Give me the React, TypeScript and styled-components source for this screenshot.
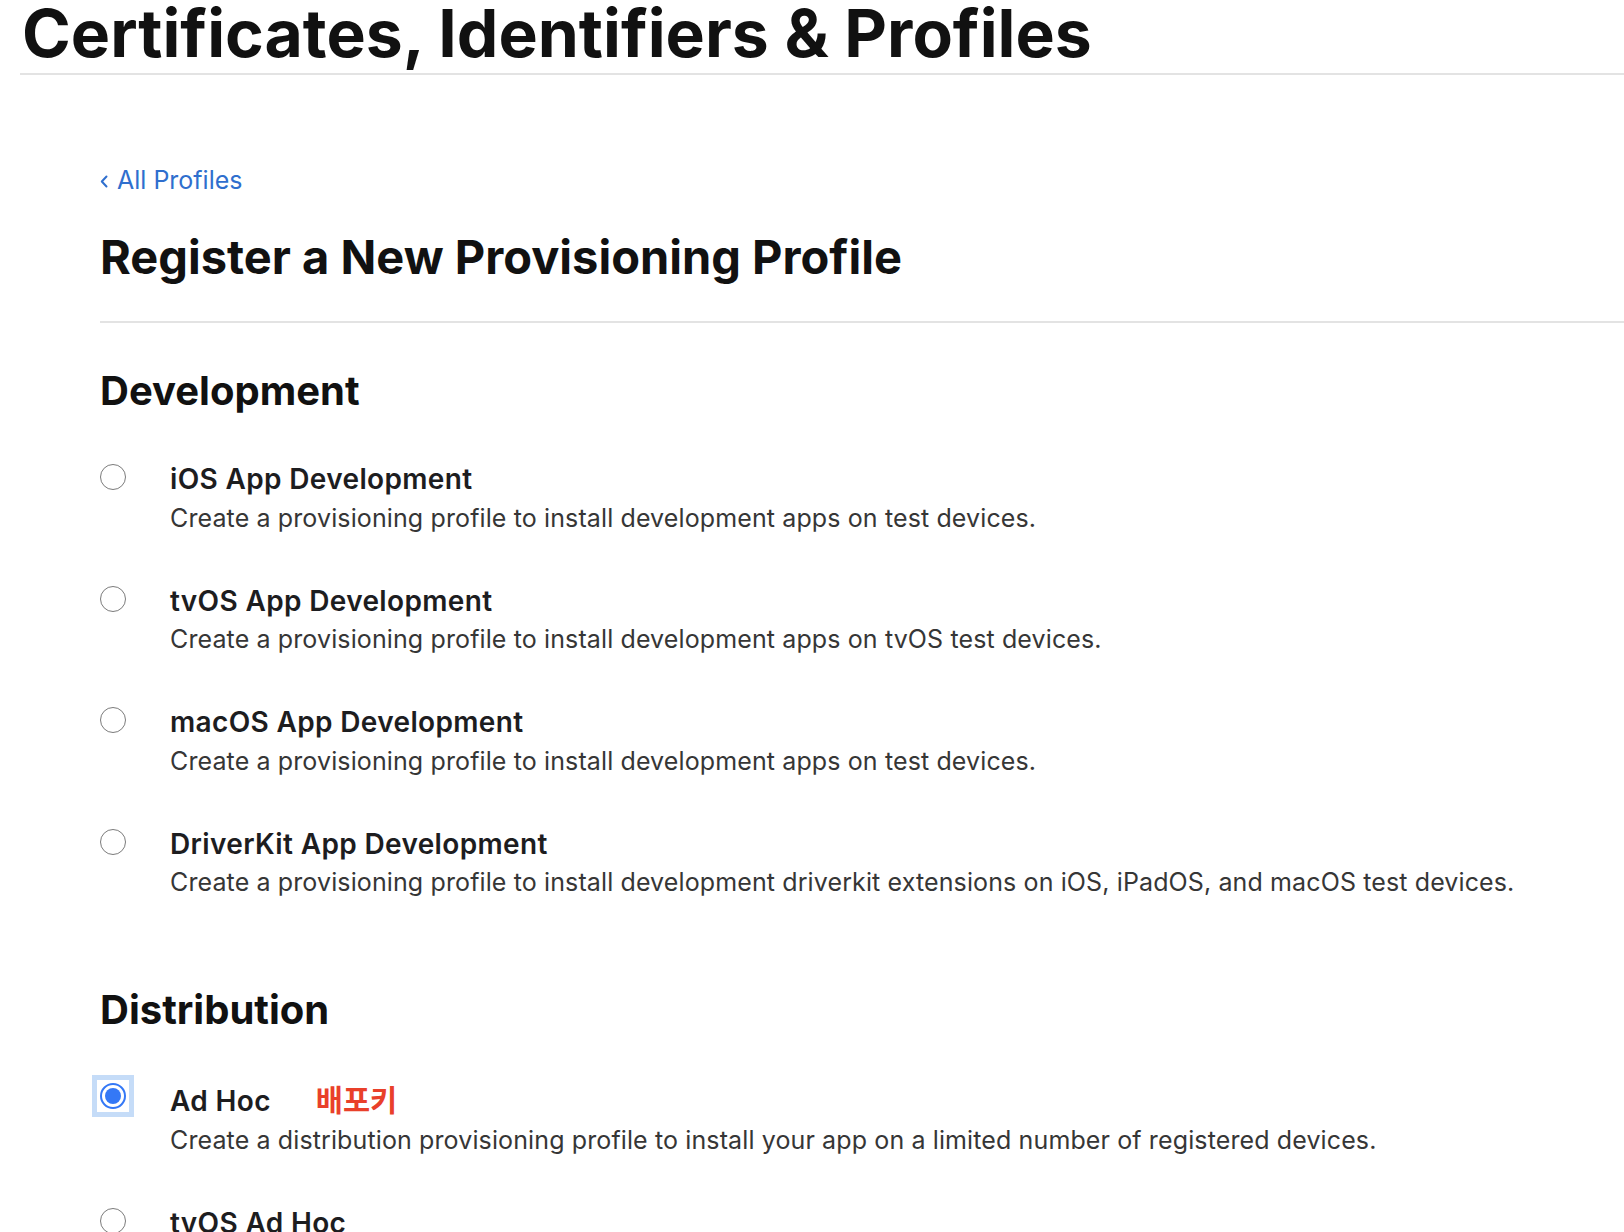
import React from "react";
import styled, { createGlobalStyle, css } from "styled-components";

const GlobalStyle = createGlobalStyle`
  html, body {
    margin: 0;
    padding: 0;
    background: #ffffff;
  }
  body {
    font-family: Inter, "Noto Sans", "Noto Sans CJK KR", sans-serif;
    color: #1d1d1f;
    -webkit-font-smoothing: antialiased;
  }
`;

// ---------- header ----------
const Header = styled.header`
  margin-left: 20px;
  padding-bottom: 7px;
  border-bottom: 2px solid #e3e3e3;
`;

const PageTitle = styled.h1`
  margin: 0;
  padding-left: 2px;
  font-size: 66px;
  line-height: 66px;
  font-weight: 700;
  color: #111111;
`;

// ---------- content ----------
const Main = styled.main`
  padding-left: 100px;
`;

const BackLink = styled.a`
  display: inline-flex;
  align-items: center;
  gap: 9px;
  margin-top: 91px;
  font-size: 25px;
  line-height: 28.8px;
  color: #2f6fce;
  text-decoration: none;
  cursor: pointer;

  svg {
    margin-top: 2px;
  }
`;

const FormTitle = styled.h2`
  margin: 35px 0 0;
  font-size: 47px;
  line-height: 54px;
  font-weight: 700;
  color: #111111;
`;

const Divider = styled.div`
  height: 2px;
  margin-top: 37px;
  background: #e3e3e3;
`;

const Section = styled.section<{ $gap: number }>`
  margin-top: ${(p) => p.$gap}px;
`;

const SectionTitle = styled.h3`
  margin: 0;
  font-size: 40px;
  line-height: 48px;
  font-weight: 700;
  color: #111111;
`;

const OptionList = styled.div`
  display: flex;
  flex-direction: column;
  gap: 51px;
  margin-top: 47.5px;
`;

const Option = styled.label`
  display: flex;
  align-items: flex-start;
  cursor: pointer;
`;

const RadioCell = styled.div`
  width: 70px;
  flex: none;
  padding-top: 2px;
`;

const Focus = styled.span<{ $on: boolean }>`
  display: inline-block;
  width: 26px;
  height: 26px;
  ${(p) =>
    p.$on &&
    css`
      box-shadow: 0 0 0 3px #ffffff, 0 0 0 8px #c5dcf8;
    `}
`;

const Radio = styled.span<{ $checked: boolean }>`
  display: flex;
  align-items: center;
  justify-content: center;
  box-sizing: border-box;
  width: 26px;
  height: 26px;
  border-radius: 50%;
  background: #ffffff;
  border: ${(p) => (p.$checked ? "2px solid #3478f6" : "1.5px solid #7b7b7b")};

  &::after {
    content: "";
    display: ${(p) => (p.$checked ? "block" : "none")};
    width: 16px;
    height: 16px;
    border-radius: 50%;
    background: #3478f6;
  }
`;

const OptionBody = styled.div`
  display: flex;
  flex-direction: column;
`;

const OptionName = styled.div`
  font-size: 28px;
  line-height: 34px;
  font-weight: 600;
  letter-spacing: 0.35px;
  color: #1d1d1f;
`;

const Note = styled.span`
  margin-left: 45px;
  font-family: "Noto Sans CJK KR", sans-serif;
  font-size: 29.5px;
  font-weight: 700;
  letter-spacing: 0;
  color: #e9402a;
`;

const OptionDesc = styled.div`
  margin-top: 6.5px;
  font-size: 25px;
  line-height: 30px;
  letter-spacing: 0.12px;
  color: #363636;
`;

type ProfileOption = {
  name: string;
  desc: string;
  checked?: boolean;
  note?: string;
};

const development: ProfileOption[] = [
  {
    name: "iOS App Development",
    desc: "Create a provisioning profile to install development apps on test devices.",
  },
  {
    name: "tvOS App Development",
    desc: "Create a provisioning profile to install development apps on tvOS test devices.",
  },
  {
    name: "macOS App Development",
    desc: "Create a provisioning profile to install development apps on test devices.",
  },
  {
    name: "DriverKit App Development",
    desc: "Create a provisioning profile to install development driverkit extensions on iOS, iPadOS, and macOS test devices.",
  },
];

const distribution: ProfileOption[] = [
  {
    name: "Ad Hoc",
    desc: "Create a distribution provisioning profile to install your app on a limited number of registered devices.",
    checked: true,
    note: "배포키",
  },
  {
    name: "tvOS Ad Hoc",
    desc: "Create a distribution provisioning profile to install your app on a limited number of registered tvOS devices.",
  },
];

function ChevronLeft() {
  return (
    <svg width="8" height="13" viewBox="0 0 8 13" fill="none">
      <path d="M6.5 1.5L1.8 6.5L6.5 11.5" stroke="#2f6fce" strokeWidth="2" strokeLinecap="round" strokeLinejoin="round" />
    </svg>
  );
}

function OptionRow({ option }: { option: ProfileOption }) {
  const checked = !!option.checked;
  return (
    <Option>
      <RadioCell>
        <Focus $on={checked}>
          <Radio $checked={checked} />
        </Focus>
      </RadioCell>
      <OptionBody>
        <OptionName>
          {option.name}
          {option.note && <Note>{option.note}</Note>}
        </OptionName>
        <OptionDesc>{option.desc}</OptionDesc>
      </OptionBody>
    </Option>
  );
}

export default function App() {
  return (
    <>
      <GlobalStyle />
      <Header>
        <PageTitle>Certificates, Identifiers &amp; Profiles</PageTitle>
      </Header>
      <Main>
        <BackLink>
          <ChevronLeft />
          All Profiles
        </BackLink>
        <FormTitle>Register a New Provisioning Profile</FormTitle>
        <Divider />

        <Section $gap={43.8}>
          <SectionTitle>Development</SectionTitle>
          <OptionList>
            {development.map((o) => (
              <OptionRow key={o.name} option={o} />
            ))}
          </OptionList>
        </Section>

        <Section $gap={88.5}>
          <SectionTitle>Distribution</SectionTitle>
          <OptionList>
            {distribution.map((o) => (
              <OptionRow key={o.name} option={o} />
            ))}
          </OptionList>
        </Section>
      </Main>
    </>
  );
}
